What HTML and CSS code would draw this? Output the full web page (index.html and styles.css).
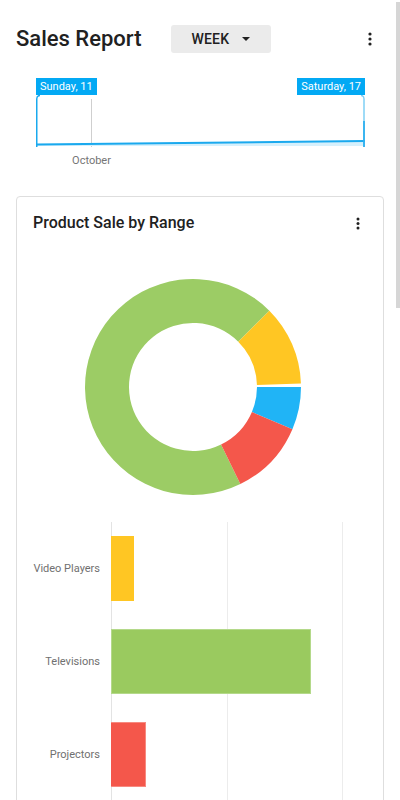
FILE: index.html
```html
<!DOCTYPE html>
<html lang="en">
<head>
<meta charset="utf-8">
<title>Sales Report</title>
<link rel="stylesheet" href="styles.css">
</head>
<body>
<header class="header">
  <h1 class="title">Sales Report</h1>
  <div class="range-btn"><span>WEEK</span><span class="caret"></span></div>
  <svg class="kebab" width="4" height="14" viewBox="0 0 4 14"><circle cx="2" cy="2" r="1.6"/><circle cx="2" cy="7" r="1.6"/><circle cx="2" cy="12" r="1.6"/></svg>
</header>

<section class="timeline">
  <div class="tl-labels">
    <span class="tl-label">Sunday, 11</span>
    <span class="tl-label">Saturday, 17</span>
  </div>
  <svg class="tl-chart" width="329" height="72" viewBox="0 0 329 72">
    <line x1="55.5" y1="4" x2="55.5" y2="52" stroke="#cfcfcf" stroke-width="1"/>
    <polygon points="0,49.5 329,46 329,51 0,51" fill="#d6f0fc"/>
    <line x1="0" y1="49.5" x2="329" y2="46" stroke="#1aa9ee" stroke-width="2"/>
    <path d="M0.75 52 V4 Q0.75 0.5 4 0.5" fill="none" stroke="#1aa9ee" stroke-width="1.5"/>
    <path d="M328 52 V4 Q328 0.5 325 0.5" fill="none" stroke="#7fcff5" stroke-width="1.5"/>
    <line x1="328" y1="26" x2="328" y2="52" stroke="#1aa9ee" stroke-width="1.5"/>
    <text x="55.5" y="69" text-anchor="middle" class="tl-axis">October</text>
  </svg>
</section>

<section class="card">
  <div class="card-head">
    <h2 class="card-title">Product Sale by Range</h2>
    <svg class="card-kebab" width="4" height="13" viewBox="0 0 4 13"><circle cx="2" cy="2" r="1.5"/><circle cx="2" cy="6.5" r="1.5"/><circle cx="2" cy="11" r="1.5"/></svg>
  </div>

  <svg class="donut" width="366" height="287" viewBox="0 0 366 287">
    <path fill="#9ccc65" d="M 223.35 249.07 A 108 108 0 1 1 252.37 75.63 L 221.25 106.75 A 64 64 0 1 0 204.06 209.52 Z"/>
    <path fill="#ffc623" d="M 252.37 75.63 A 108 108 0 0 1 283.94 148.42 L 239.96 149.88 A 64 64 0 0 0 221.25 106.75 Z"/>
    <path fill="#20b4f6" d="M 284 152 A 108 108 0 0 1 275.41 194.20 L 234.91 177 A 64 64 0 0 0 240 152 Z"/>
    <path fill="#f4574b" d="M 275.41 194.20 A 108 108 0 0 1 223.35 249.07 L 204.06 209.52 A 64 64 0 0 0 234.91 177 Z"/>
  </svg>

  <div class="bar-chart">
    <div class="bar-labels">
      <div class="bar-label">Video Players</div>
      <div class="bar-label">Televisions</div>
      <div class="bar-label">Projectors</div>
    </div>
    <div class="bar-plot">
      <div class="bar-row"><div class="bar bar-yellow" style="width:23px"></div></div>
      <div class="bar-row"><div class="bar bar-green" style="width:200px"></div></div>
      <div class="bar-row"><div class="bar bar-red" style="width:35px"></div></div>
    </div>
  </div>
</section>

<div class="scrollbar"></div>
</body>
</html>
```

FILE: styles.css
```css
* { box-sizing: border-box; }

html, body {
  margin: 0;
  padding: 0;
  background: #ffffff;
}

body {
  font-family: Roboto, "Noto Sans", Arial, sans-serif;
  color: #212121;
}

.header {
  display: flex;
  align-items: center;
  height: 28px;
  margin-top: 25px;
  padding-left: 16px;
}

.title {
  margin: 0;
  font-size: 22px;
  line-height: 28px;
  font-weight: 500;
  color: #212121;
}

.range-btn {
  display: flex;
  align-items: center;
  width: 100px;
  height: 28px;
  margin-left: 30px;
  padding-left: 20px;
  background: #ebebeb;
  border-radius: 3px;
  font-size: 14px;
  font-weight: 500;
  letter-spacing: 0.2px;
  color: #212121;
}

.caret {
  width: 0;
  height: 0;
  margin-left: 13px;
  border-left: 4px solid transparent;
  border-right: 4px solid transparent;
  border-top: 4px solid #212121;
}

.kebab {
  margin-left: auto;
  margin-right: 28px;
  fill: #212121;
}

.timeline {
  width: 329px;
  margin: 25px 0 0 36px;
}

.tl-labels {
  display: flex;
  justify-content: space-between;
}

.tl-label {
  display: block;
  height: 17px;
  padding: 0 4px;
  background: #03a9f4;
  color: #ffffff;
  font-size: 11px;
  line-height: 17px;
}

.tl-chart {
  display: block;
}

.tl-axis {
  font-family: Roboto, Arial, sans-serif;
  font-size: 11px;
  fill: #757575;
}

.card {
  margin: 29px 16px 0 16px;
  border: 1px solid #dedede;
  border-radius: 4px;
  padding-bottom: 40px;
}

.card-head {
  display: flex;
  align-items: center;
  justify-content: space-between;
  height: 24px;
  margin-top: 14px;
  padding: 0 23px 0 16px;
}

.card-title {
  margin: 0;
  font-size: 16px;
  line-height: 24px;
  font-weight: 500;
  color: #212121;
}

.card-kebab {
  fill: #212121;
}

.donut {
  display: block;
}

.bar-chart {
  display: flex;
}

.bar-labels {
  width: 94px;
  padding-right: 11px;
}

.bar-label {
  height: 93px;
  display: flex;
  align-items: center;
  justify-content: flex-end;
  font-size: 11px;
  color: #707070;
}

.bar-plot {
  width: 233px;
  background-image:
    linear-gradient(to right, #e3e3e3 0 1px, transparent 1px),
    linear-gradient(to right, transparent 116px, #ececec 116px 117px, transparent 117px),
    linear-gradient(to right, transparent 231px, #ececec 231px 232px, transparent 232px);
}

.bar-row {
  height: 93px;
  display: flex;
  align-items: center;
}

.bar {
  height: 65px;
}

.bar-yellow { background: #ffc623; }
.bar-green { background: #9aca5f; border: 1px solid #b4d98a; }
.bar-red { background: #f4574b; border: 1px solid #f78a80; border-left: none; }

.scrollbar {
  position: fixed;
  top: 2px;
  right: 0;
  width: 4px;
  height: 306px;
  background: #d6d6d6;
}
```
